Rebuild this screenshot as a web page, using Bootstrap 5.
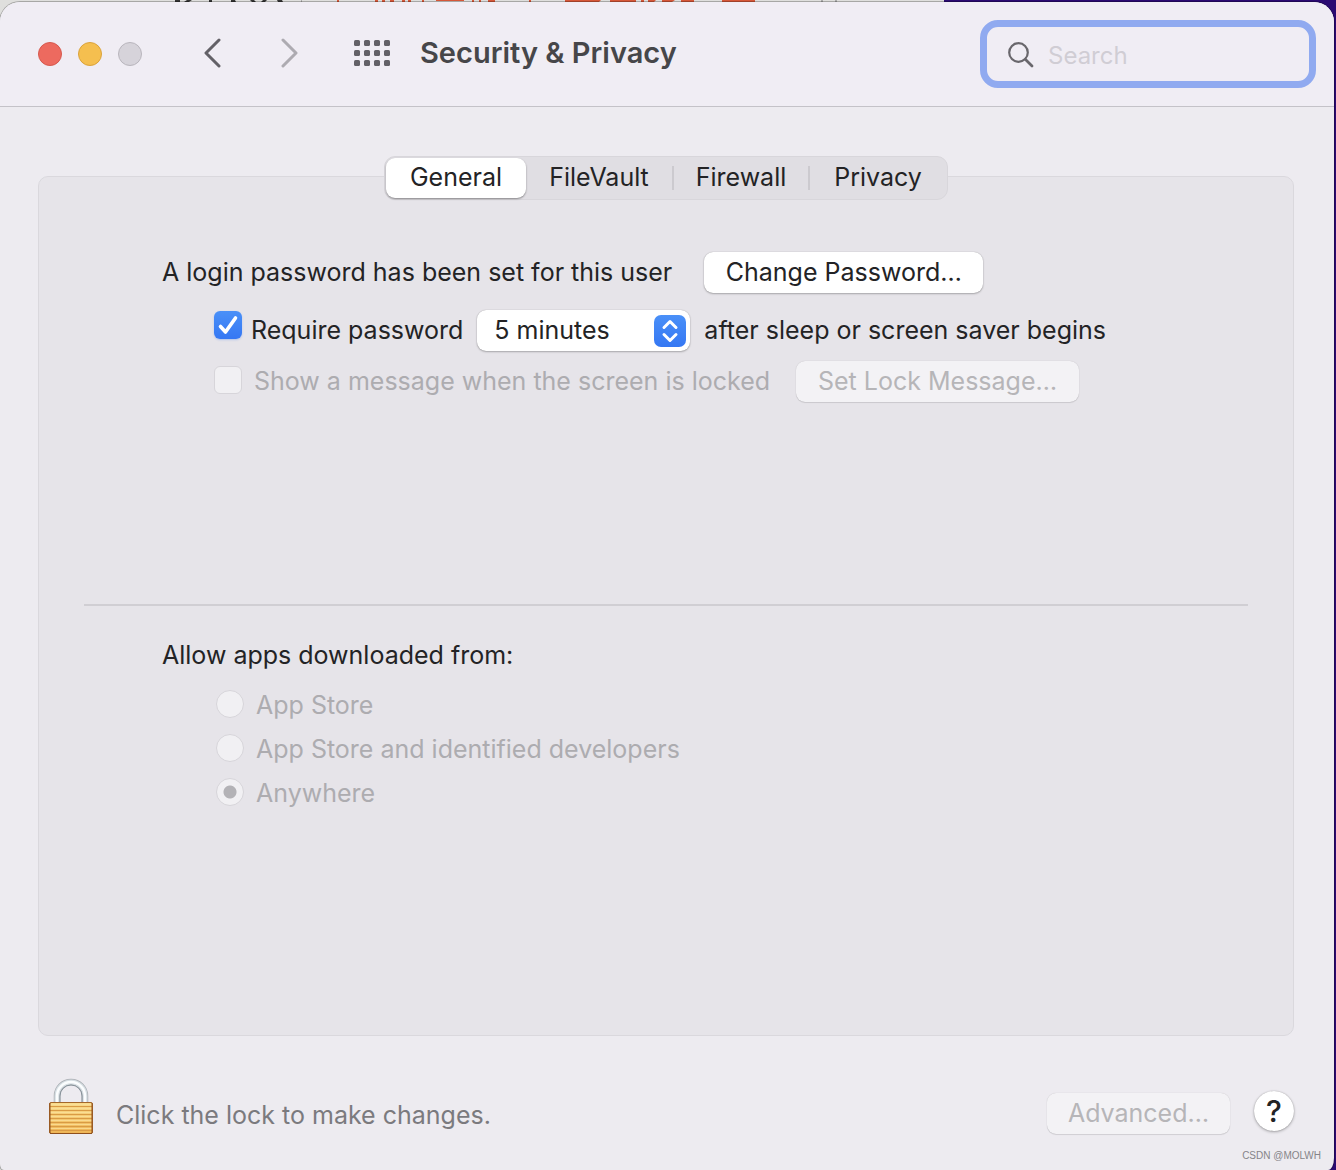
<!DOCTYPE html>
<html lang="en">
<head>
<meta charset="utf-8">
<meta name="viewport" content="width=device-width, initial-scale=1">
<title>Security &amp; Privacy</title>
<link href="https://cdn.jsdelivr.net/npm/bootstrap@5.3.0/dist/css/bootstrap.min.css" rel="stylesheet">
<style>
  body {
    font-family: Inter, "Liberation Sans", "Noto Sans CJK SC", sans-serif;
    font-size: 25px;
    line-height: 32px;
    color: #232325;
    background: linear-gradient(90deg, #dfdfdd 944px, #2b0a72 944px);
  }
  .desktop-strip { display: block; left: 0; top: 0; }
  .window {
    margin: 2px 2px 0 0;
    min-height: calc(100vh - 2px);
    background: #edebf0;
    border-radius: 20px 20px 6px 4px / 20px 20px 12px 6px;
    box-shadow: 0 0 0 1px rgba(0, 0, 0, .25);
    overflow: hidden;
  }
  .toolbar {
    height: 105px;
    padding: 0 18px 0 38px;
    background: #f0edf4;
    border-bottom: 1px solid #c4c2c8;
  }
  .light { width: 24px; height: 24px; padding: 0; border-radius: 50%; border: 1px solid; }
  .light-close { background: #ed6a5f; border-color: #d6594e; }
  .light-min { background: #f5bf4f; border-color: #dba33b; }
  .light-zoom { background: #d6d3da; border-color: #b9b6bd; }
  .tool { width: 40px; height: 40px; padding: 0; border: 0; background: none; display: flex; align-items: center; justify-content: center; }
  .tool:disabled { opacity: 1; }
  .tools { margin: 0 0 2px 50px; gap: 38px; }
  .window-title { margin: 0 0 2px 28px; font-size: 29px; line-height: 36px; font-weight: 600; color: #464649; }
  .search-box {
    width: 336px; height: 68px;
    padding: 0 20px;
    border: 7px solid #90aaf0;
    border-radius: 18px;
    gap: 14px;
  }
  .search-box input { min-width: 0; border: 0; outline: 0; background: none; font-size: 24px; padding: 3px 0 0; color: #232325; }
  .search-box input::placeholder { color: #d0cdd4; opacity: 1; }

  .content-area { padding: 49px 40px 0 38px; }
  .tabs {
    position: relative; z-index: 1;
    padding: 1px;
    margin-bottom: -24px;
    background: #e0dee3;
    border: 1px solid #d8d6db;
    border-radius: 11px;
  }
  .tabs button { height: 40px; padding: 0 0 2px; border: 0; background: none; color: inherit; border-radius: 9px; }
  .tabs .tab-general { width: 140px; }
  .tabs .tab-filevault { width: 148px; }
  .tabs .tab-firewall, .tabs .tab-privacy { width: 136px; }
  .tabs button.active { background: #fff; box-shadow: 0 1px 2px rgba(0, 0, 0, .4); }
  .tabs .ruled { border-right: 2px solid #cccacf; border-radius: 0; height: 24px; line-height: 22px; }
  .panel {
    background: #e6e4e9;
    border: 1px solid #dad8dd;
    border-radius: 10px;
    padding: 75px 45px 0;
  }
  .inset-block { padding-left: 78px; }
  .indent { padding-left: 52px; }
  .login-block { min-height: 352px; }
  .row-text { padding-bottom: 2px; }
  .mac-btn, .mac-select {
    height: 41px; border: 0; border-radius: 9px;
    background: #fff; color: inherit; padding: 0 0 2px;
    box-shadow: 0 0 1px rgba(0, 0, 0, .3), 0 1px 2px rgba(0, 0, 0, .25);
  }
  .mac-btn:disabled { background: #f3f2f5; color: #b6b5b8; box-shadow: 0 0 1px rgba(0, 0, 0, .2), 0 1px 1px rgba(0, 0, 0, .1); }
  .btn-change { width: 279px; margin-left: 32px; }
  .btn-lockmsg { width: 283px; margin-left: 26px; }
  .btn-advanced { width: 183px; }
  .select-wrap { margin: 0 14px; }
  .mac-select { display: block; width: 213px; padding-left: 17px; appearance: none; }
  .select-arrows { position: absolute; right: 4px; top: 5px; pointer-events: none; }
  .faded { color: #adacb0; }
  .mac-check, .mac-radio {
    appearance: none; flex: none; width: 28px; height: 28px; margin: 0;
    background: #f1f0f3; border: 1px solid #d7d5da;
  }
  .mac-check { border-radius: 6px; }
  .mac-check:checked {
    border: 0;
    background: url("data:image/svg+xml,%3Csvg xmlns='http://www.w3.org/2000/svg' viewBox='0 0 28 28'%3E%3Cpath d='M6.500 15.500l5 5.500L21.500 7' fill='none' stroke='white' stroke-width='3.600' stroke-linecap='round' stroke-linejoin='round'/%3E%3C/svg%3E"), linear-gradient(#4a90f8, #3577f3);
    box-shadow: 0 1px 2px rgba(53, 119, 243, .3);
  }
  .mac-radio { border-radius: 50%; }
  .mac-radio:checked { background: radial-gradient(circle, #b3b2b6 6px, #f1f0f3 7px); }
  .row-require { margin-top: 17px; }
  .row-message { margin-top: 10px; }
  .row-check { height: 41px; gap: 9px; }
  .row-check .mac-check { margin-top: 1px; }
  .row-faded { gap: 12px; }
  .radio-row { height: 44px; gap: 12px; padding-left: 54px; }
  .radio-row label { padding-top: 2px; }
  .divider { margin: 0; border: 0; height: 2px; background: #d0ced3; opacity: 1; }
  .source-title { font-size: 25px; line-height: 32px; padding-top: 33px; margin-bottom: 11px; }
  .footer-bar { height: 134px; padding: 42px 40px 0 48px; color: #7b7a7e; }
  .lock-btn { border: 0; background: none; padding: 0; line-height: 0; }
  .lock-text { margin: 21px 0 0 22px; }
  .help-group { padding-top: 13px; }
  .btn-advanced { margin-top: 2px; }
  .help { width: 40px; height: 40px; padding: 0; border: 0; border-radius: 50%; background: #fff; color: #232325; font-size: 30px; font-weight: 500; line-height: 40px; box-shadow: 0 0 1px rgba(0, 0, 0, .3), 0 1px 3px rgba(0, 0, 0, .3); }
  .watermark { right: 13px; bottom: 6px; font: 10px/16px "Liberation Sans", sans-serif; color: #858488; }
</style>
<script src="https://cdn.jsdelivr.net/npm/bootstrap@5.3.0/dist/js/bootstrap.bundle.min.js"></script>
</head>
<body>
<svg class="desktop-strip position-absolute" width="944" height="2" aria-hidden="true">
  <path d="M175 0h5v2h-5zM187 0h5l-3 2h-5zM209 0h3v2h-3zM231 0h4l1 2h-5zM250 0h4l2 2h-4zM263 0h4l-2 2h-4zM277 0h5l1 2h-5z" fill="#333"/>
  <path d="M301 0h1v2h-1zM821 0h2v2h-2zM835 0h2v2h-2z" fill="#aaa"/>
  <path d="M337 0h2v2h-2zM375 0h3v2h-3zM382 0h3v2h-3zM390 0h4v2h-4zM402 0h3v2h-3zM408 0h3v2h-3zM422 0h2v2h-2zM436 0h28v1h-28zM472 0h2v2h-2zM479 0h2v2h-2zM488 0h7v2h-7zM529 0h2v2h-2zM565 0h36l-2 2h-34zM610 0h26v2h-26zM641 0h3v2h-3zM648 0h8l-2 2h-6zM662 0h13l-3 2h-10zM681 0h13v2h-13zM722 0h33v2h-33z" fill="#d65738"/>
</svg>
<div class="window position-relative d-flex flex-column">
  <header class="toolbar d-flex align-items-center">
    <div class="d-flex gap-3">
      <button class="light light-close" aria-label="Close"></button>
      <button class="light light-min" aria-label="Minimize"></button>
      <button class="light light-zoom" aria-label="Zoom" disabled></button>
    </div>
    <nav class="tools d-flex" aria-label="Toolbar">
      <button class="tool" aria-label="Back"><svg width="20" height="30" viewBox="0 0 20 30" fill="none" stroke="#636167" stroke-width="3" stroke-linecap="round" stroke-linejoin="round"><path d="M17 2L4 15l13 13"/></svg></button>
      <button class="tool" aria-label="Forward" disabled><svg width="20" height="30" viewBox="0 0 20 30" fill="none" stroke="#adabb1" stroke-width="3" stroke-linecap="round" stroke-linejoin="round"><path d="M3 2l13 13L3 28"/></svg></button>
      <button class="tool ms-1" aria-label="Show All"><svg width="36" height="26" viewBox="0 0 36 26" fill="#636167"><defs><g id="dots"><rect width="6" height="6" rx="1.500"/><rect x="10" width="6" height="6" rx="1.500"/><rect x="20" width="6" height="6" rx="1.500"/><rect x="30" width="6" height="6" rx="1.500"/></g></defs><use href="#dots"/><use href="#dots" y="10"/><use href="#dots" y="20"/></svg></button>
    </nav>
    <h1 class="window-title">Security &amp; Privacy</h1>
    <label class="search-box d-flex align-items-center ms-auto">
      <svg class="flex-shrink-0" width="27" height="27" viewBox="0 0 27 27" fill="none" stroke="#69676c" stroke-width="2.200" stroke-linecap="round"><circle cx="11.500" cy="11.500" r="9.300"/><path d="M18.500 18.500l6.500 6.500" stroke-width="2.800"/></svg>
      <input class="flex-grow-1" type="search" placeholder="Search" aria-label="Search">
    </label>
  </header>

  <main class="content-area d-flex flex-column flex-grow-1">
    <div class="tabs d-flex align-items-center align-self-center" role="tablist">
      <button class="tab-general active" role="tab" aria-selected="true">General</button>
      <button class="tab-filevault ruled" role="tab" aria-selected="false">FileVault</button>
      <button class="tab-firewall ruled" role="tab" aria-selected="false">Firewall</button>
      <button class="tab-privacy" role="tab" aria-selected="false">Privacy</button>
    </div>
    <section class="panel flex-grow-1" role="tabpanel">
      <div class="login-block inset-block">
        <div class="d-flex align-items-center">
          <span class="row-text">A login password has been set for this user</span>
          <button class="mac-btn btn-change">Change Password…</button>
        </div>
        <div class="row-require indent d-flex align-items-center">
          <div class="row-check d-flex">
            <input class="mac-check" type="checkbox" id="require" checked>
            <label class="row-text align-self-center" for="require">Require password</label>
          </div>
          <div class="select-wrap position-relative">
            <select class="mac-select" id="delay" aria-label="Delay before password is required">
              <option>5 minutes</option>
            </select>
            <svg class="select-arrows" width="32" height="32" viewBox="0 0 32 32" fill="none"><defs><linearGradient id="blue" x2="0" y2="1"><stop stop-color="#4a90f8"/><stop offset="1" stop-color="#3577f3"/></linearGradient></defs><rect width="32" height="32" rx="7" fill="url(#blue)"/><path d="M10 12.500l6-6 6 6M10 19.500l6 6 6-6" stroke="#fff" stroke-width="3" stroke-linecap="round" stroke-linejoin="round"/></svg>
          </div>
          <label class="row-text" for="delay">after sleep or screen saver begins</label>
        </div>
        <div class="row-message indent d-flex align-items-center">
          <div class="row-faded d-flex align-items-center faded">
            <input class="mac-check mb-1" type="checkbox" id="message" disabled>
            <label class="row-text" for="message">Show a message when the screen is locked</label>
          </div>
          <button class="mac-btn btn-lockmsg" disabled>Set Lock Message…</button>
        </div>
      </div>
      <hr class="divider">
      <fieldset class="inset-block">
        <legend class="source-title">Allow apps downloaded from:</legend>
        <div class="radio-row d-flex align-items-center faded"><input class="mac-radio" type="radio" name="source" id="store" disabled><label for="store">App Store</label></div>
        <div class="radio-row d-flex align-items-center faded"><input class="mac-radio" type="radio" name="source" id="devs" disabled><label for="devs">App Store and identified developers</label></div>
        <div class="radio-row d-flex align-items-center faded"><input class="mac-radio" type="radio" name="source" id="any" checked disabled><label for="any">Anywhere</label></div>
      </fieldset>
    </section>
  </main>

  <footer class="footer-bar d-flex align-items-start">
    <button class="lock-btn" aria-label="Unlock settings">
      <svg width="46" height="58" viewBox="0 0 46 58">
        <defs>
          <linearGradient id="gold" x2="0" y2="1"><stop stop-color="#f8dc8c"/><stop offset=".5" stop-color="#f4c970"/><stop offset="1" stop-color="#eeb456"/></linearGradient>
        </defs>
        <path d="M9 26V18a14 14 0 0 1 28 0v8" fill="none" stroke="#a9adb2" stroke-width="6.500"/>
        <path d="M9 26V18a14 14 0 0 1 28 0v8" fill="none" stroke="#d5dde2" stroke-width="5"/>
        <path d="M9 26V18a14 14 0 0 1 28 0v8" fill="none" stroke="#fbfdfe" stroke-width="2.500"/>
        <path d="M12 26V18a11 11 0 0 1 22 0v8" fill="none" stroke="#87929a" stroke-width="1"/>
        <rect x="1.500" y="24.500" width="43" height="31" rx="1.500" fill="url(#gold)" stroke="#a4672a"/>
        <path d="M2 28.500h42M2 32.500h42M2 36.500h42M2 40.500h42M2 44.500h42M2 48.500h42M2 52.500h42" stroke="#d99a45" stroke-width="1.200"/>
        <path d="M2 26.500h42M2 30.500h42M2 34.500h42M2 38.500h42M2 42.500h42M2 46.500h42M2 50.500h42" stroke="#fbe09a" stroke-width=".8"/>
        <path d="M2 25v30M44 25v30M2 55.500h42" stroke="#8f4f1c" stroke-width="1"/>
      </svg>
    </button>
    <span class="lock-text">Click the lock to make changes.</span>
    <div class="help-group d-flex align-items-start gap-4 ms-auto">
      <button class="mac-btn btn-advanced" disabled>Advanced…</button>
      <button class="help" aria-label="Help">?</button>
    </div>
  </footer>
  <small class="watermark position-absolute">CSDN @MOLWH</small>
</div>
</body>
</html>
